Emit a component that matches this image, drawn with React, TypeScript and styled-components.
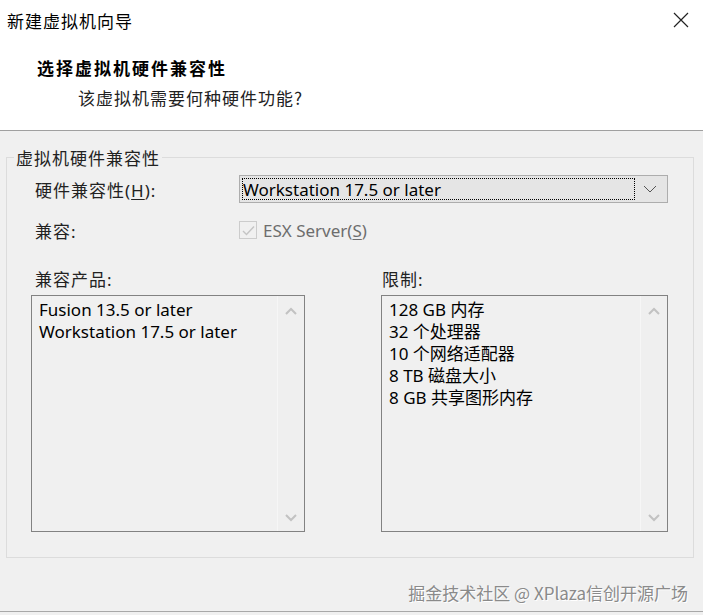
import React from "react"
import styled, { createGlobalStyle } from "styled-components"

const GlobalStyle = createGlobalStyle`
  html, body {
    margin: 0;
    padding: 0;
    background: #f0f0f0;
  }
  body {
    font-family: "Noto Sans", "Noto Sans CJK SC", sans-serif;
    color: #000;
  }
`

const cjk = `"Noto Sans CJK SC", sans-serif`
const latin = `"Noto Sans", "Noto Sans CJK SC", sans-serif`

const Window = styled.div`
  width: 703px;
  height: 615px;
  display: flex;
  flex-direction: column;
  background: #f0f0f0;
  overflow: hidden;
`

const Header = styled.div`
  height: 131px;
  background: #fff;
  border-bottom: 1px solid #a0a0a0;
  display: flex;
  flex-direction: column;
  box-sizing: border-box;
`

const TitleBar = styled.div`
  height: 40px;
  display: flex;
  align-items: center;
  justify-content: space-between;
  padding: 0 10px 0 7px;
`

const WindowTitle = styled.span`
  font-family: ${cjk};
  font-size: 17px;
  letter-spacing: 1px;
`

const CloseBtn = styled.button`
  width: 24px;
  height: 24px;
  border: none;
  background: transparent;
  padding: 0;
  display: flex;
  align-items: center;
  justify-content: center;
`

const Heading = styled.div`
  font-family: ${cjk};
  font-weight: 700;
  font-size: 17px;
  letter-spacing: 2px;
  margin: 15px 0 0 37px;
`

const SubHeading = styled.div`
  font-family: ${cjk};
  font-size: 17px;
  letter-spacing: 1px;
  color: #222;
  margin: 5px 0 0 78px;
`

const Group = styled.fieldset`
  margin: 14px 9px 0 6px;
  padding: 0;
  border: 1px solid #dcdcdc;
  height: 413px;
  box-sizing: border-box;
`

const Legend = styled.legend`
  font-family: ${cjk};
  font-size: 17px;
  letter-spacing: 1px;
  color: #222;
  padding: 0 2px;
  margin-left: 7px;
`

const GroupBody = styled.div`
  padding: 0 25px 0 24px;
`

const FormRow = styled.div<{ h: number }>`
  display: grid;
  grid-template-columns: 204px 1fr;
  align-items: center;
  height: ${(p) => p.h}px;
  margin-left: 4px;
`

const Label = styled.span`
  font-family: ${latin};
  font-size: 17px;
  letter-spacing: 1px;
  color: #222;
  u { text-decoration: underline; text-underline-offset: 2px; }
`

const Select = styled.div`
  height: 28px;
  box-sizing: border-box;
  border: 1px solid #adadad;
  background: #e5e5e5;
  display: flex;
  align-items: center;
  padding: 2px;
`

const Focus = styled.div`
  flex: 1;
  height: 100%;
  box-sizing: border-box;
  border: 1px dotted #000;
  display: flex;
  align-items: center;
  font-family: ${latin};
  font-size: 17px;
`

const Chevron = styled.div`
  width: 30px;
  display: flex;
  align-items: center;
  justify-content: center;
`

const Check = styled.label`
  display: flex;
  align-items: center;
  gap: 6px;
  font-family: ${latin};
  font-size: 17px;
  color: #6d6d6d;
  u { text-decoration: underline; text-underline-offset: 2px; }
`

const CheckBox = styled.span`
  width: 18px;
  height: 18px;
  box-sizing: border-box;
  border: 1px solid #cccccc;
  background: #f0f0f0;
  display: flex;
  align-items: center;
  justify-content: center;
`

const Lists = styled.div`
  display: grid;
  grid-template-columns: 274px 287px;
  column-gap: 76px;
  margin-top: 14px;
`

const ListColumn = styled.div`
  display: flex;
  flex-direction: column;
  gap: 4px;
`

const ListLabel = styled(Label)<{ indent: number }>`
  margin-left: ${(p) => p.indent}px;
`

const ListBox = styled.div`
  height: 237px;
  box-sizing: border-box;
  border: 1px solid #828282;
  display: flex;
  background: #f0f0f0;
`

const Items = styled.div`
  flex: 1;
  padding: 3px 7px;
  font-family: ${latin};
  font-size: 17px;
  line-height: 22px;
`

const Scrollbar = styled.div`
  width: 26px;
  border-left: 1px solid #f6f6f6;
  background: #efefef;
  display: flex;
  flex-direction: column;
  justify-content: space-between;
  align-items: center;
  padding: 10px 0 8px;
`

const Footer = styled.div`
  flex: 1;
  display: flex;
  justify-content: flex-end;
  align-items: flex-start;
  padding: 22px 15px 0 0;
  border-bottom: 1px solid #a8a8a8;
  margin-bottom: 3px;
`

const Watermark = styled.span`
  font-family: ${cjk};
  font-size: 17px;
  color: #8a8a8a;
  text-shadow: 1px 1px 0 #fff;
`

const Arrow = ({ up }: { up?: boolean }) => (
  <svg width="14" height="10" viewBox="0 0 14 10">
    <path
      d={up ? "M2 8 L7 3 L12 8" : "M2 2 L7 7 L12 2"}
      fill="none"
      stroke="#c2c2c2"
      strokeWidth="2"
    />
  </svg>
)

const List = ({ items }: { items: string[] }) => (
  <ListBox>
    <Items>
      {items.map((t) => (
        <div key={t}>{t}</div>
      ))}
    </Items>
    <Scrollbar>
      <Arrow up />
      <Arrow />
    </Scrollbar>
  </ListBox>
)

export default function App() {
  return (
    <Window>
      <GlobalStyle />
      <Header>
        <TitleBar>
          <WindowTitle>新建虚拟机向导</WindowTitle>
          <CloseBtn aria-label="关闭">
            <svg width="16" height="16" viewBox="0 0 16 16">
              <path d="M1 1 L15 15 M15 1 L1 15" stroke="#222" strokeWidth="1.2" />
            </svg>
          </CloseBtn>
        </TitleBar>
        <Heading>选择虚拟机硬件兼容性</Heading>
        <SubHeading>该虚拟机需要何种硬件功能?</SubHeading>
      </Header>

      <Group>
        <Legend>虚拟机硬件兼容性</Legend>
        <GroupBody>
          <FormRow h={38}>
            <Label>
              硬件兼容性(<u>H</u>):
            </Label>
            <Select>
              <Focus>Workstation 17.5 or later</Focus>
              <Chevron>
                <svg width="14" height="8" viewBox="0 0 14 8">
                  <path d="M1 1 L7 7 L13 1" fill="none" stroke="#555" strokeWidth="1" />
                </svg>
              </Chevron>
            </Select>
          </FormRow>
          <FormRow h={44}>
            <Label>兼容:</Label>
            <Check>
              <CheckBox>
                <svg width="13" height="11" viewBox="0 0 13 11">
                  <path d="M1 6 L4.5 9.5 L12 1.5" fill="none" stroke="#c4c4c4" strokeWidth="1.4" />
                </svg>
              </CheckBox>
              <span>
                ESX Server(<u>S</u>)
              </span>
            </Check>
          </FormRow>
          <Lists>
            <ListColumn>
              <ListLabel indent={4}>兼容产品:</ListLabel>
              <List items={["Fusion 13.5 or later", "Workstation 17.5 or later"]} />
            </ListColumn>
            <ListColumn>
              <ListLabel indent={1}>限制:</ListLabel>
              <List
                items={[
                  "128 GB 内存",
                  "32 个处理器",
                  "10 个网络适配器",
                  "8 TB 磁盘大小",
                  "8 GB 共享图形内存",
                ]}
              />
            </ListColumn>
          </Lists>
        </GroupBody>
      </Group>

      <Footer>
        <Watermark>掘金技术社区 @ XPlaza信创开源广场</Watermark>
      </Footer>
    </Window>
  )
}
